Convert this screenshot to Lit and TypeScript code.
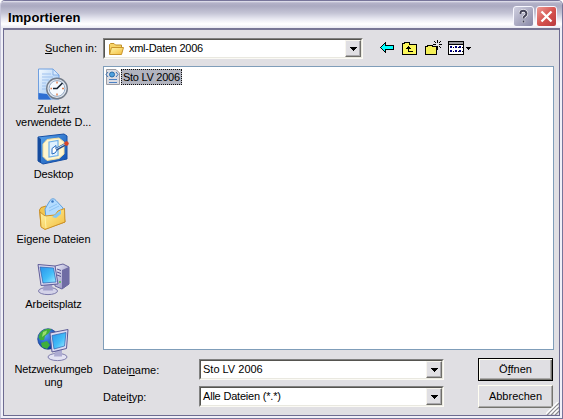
import { LitElement, html, css, svg } from "lit";
import { customElement, property } from "lit/decorators.js";

const defs = svg`<defs>
  <linearGradient id="paper" x1="0" y1="0" x2="1" y2="1"><stop offset="0" stop-color="#f4faff"/><stop offset="1" stop-color="#8fbdf2"/></linearGradient>
  <linearGradient id="blue" x1="0" y1="0" x2="1" y2="1"><stop offset="0" stop-color="#5aa6ee"/><stop offset="1" stop-color="#0f4fb0"/></linearGradient>
  <linearGradient id="gold" x1="0" y1="0" x2="1" y2="1"><stop offset="0" stop-color="#fff6a8"/><stop offset="1" stop-color="#f3bc3c"/></linearGradient>
  <linearGradient id="screen" x1="0" y1="0" x2="1" y2="1"><stop offset="0" stop-color="#2a93ea"/><stop offset="0.55" stop-color="#42bdf8"/><stop offset="1" stop-color="#a5ecff"/></linearGradient>
  <linearGradient id="metal" x1="0" y1="0" x2="1" y2="1"><stop offset="0" stop-color="#eeeefb"/><stop offset="1" stop-color="#8583b5"/></linearGradient>
  <radialGradient id="globe" cx="0.35" cy="0.3" r="0.75"><stop offset="0" stop-color="#55a8fa"/><stop offset="1" stop-color="#082f96"/></radialGradient>
</defs>`;

const places: Record<string, unknown> = {
  recent: svg`
    <path d="M1.500 1H16L22 7V31H1.500Z" fill="url(#paper)" stroke="#6f9fe0"/>
    <path d="M16 1V7H22Z" fill="#d5e7fc" stroke="#6f9fe0" stroke-width=".7"/>
    <path d="M5 6h9M5 9h11M5 12h7M5 15h4M5 18h4M5 21h4" stroke="#9fc1ee"/>
    <path d="M1.500 25L10 26L14 31.500H1.500Z" fill="#2f6fd2"/>
    <circle cx="20" cy="20.500" r="10.300" fill="#dfe5ee" stroke="#737c8a" stroke-width="1.400"/>
    <circle cx="20" cy="20.500" r="7.900" fill="#f6faff" stroke="#98acc6"/>
    <path d="M13.500 20.500h1.500M25 20.500h2" stroke="#e08050" stroke-width="1.500"/>
    <path d="M20 13.500v2M20 25.500v2" stroke="#e08050" stroke-width="1.500"/>
    <path d="M25.500 15L20 20.500H16" fill="none" stroke="#1c2836" stroke-width="1.700"/>`,
  desktop: svg`
    <path d="M1 4L27 1L30 3V26L6 31L1 28Z" fill="url(#blue)" stroke="#1750a6"/>
    <path d="M1 4L4 6V30L1 28Z" fill="#164b9d"/>
    <path d="M10 6.500L22 5L27 9V21L22 25.500L10 27.500L6 23.500V11Z" fill="#fff6cf" stroke="#f0dc9c"/>
    <path d="M12 9L21 7.500V22.500L12 24Z" fill="#dff1ff" stroke="#6fb0ea" stroke-width="1.200"/>
    <path d="M15 21V15.500L19 12.500V15.500L22 14.500L18 20Z" fill="#fff" stroke="#276dc0"/>
    <path d="M19 16.500L28 11.500" stroke="#314f85" stroke-width="2.600"/><path d="M19 16L28 11" stroke="#a8d7ff"/>
    <circle cx="29.500" cy="10.500" r="2.200" fill="#d84525"/>`,
  files: svg`
    <path d="M2.500 12L4 9.500L9 8L11 10L26 11L28 24L8 31L4 28Z" fill="#f2c650" stroke="#c98e25"/>
    <path d="M8 11L13 2.500Q16 -1 19 2.500L26 10L24 22L9 20Z" fill="#b4dcff" stroke="#5f9fdc"/>
    <circle cx="15.500" cy="3.500" r="1.300" fill="#3b79c4"/>
    <path d="M12 10L20 6M12 13L22 8" stroke="#8cc4f4"/>
    <path d="M3 14L8 18L18 17L21 13L27.500 10.500L28 24L8 31.500L4 29Z" fill="url(#gold)" stroke="#cc922a"/>
    <path d="M8 18L9 30" stroke="#fff2a8"/>
    <path d="M15 19L24 12L24 16L19 20Z" fill="#83c9f8"/>`,
  computer: svg`
    <path d="M18 3L26 1L32 4V21L25 26L18 23Z" fill="url(#metal)" stroke="#67649c"/>
    <path d="M25 7L32 4V21L25 26Z" fill="#6f6ca4"/><path d="M20 6l4 1.500M20 9l4 1.500M20 12l4 1.500" stroke="#555290"/>
    <circle cx="23" cy="19" r="1" fill="#51c04a"/>
    <ellipse cx="11" cy="28" rx="9.500" ry="3.600" fill="#d4d3e9" stroke="#7b79aa"/>
    <path d="M7 21H15L16 27.500H6Z" fill="#a19fca"/>
    <path d="M1 1.500L18 3L21 21L4 22.500Z" fill="#d6d5ee" stroke="#605e9b"/>
    <path d="M3 4L16.500 5L19 19L6 20Z" fill="url(#screen)" stroke="#2a62b0" stroke-width=".7"/>`,
  network: svg`
    <circle cx="11" cy="11" r="10.300" fill="url(#globe)" stroke="#143c94" stroke-width=".7"/>
    <path d="M3 5Q8 0 14 1L12 5L8 8L7 12L3 12L1.500 9ZM4 15L10 13L13 17L10 21L5 19Z" fill="#3fae3c"/>
    <path d="M6 4L10 2.500L9 6L5 9Z" fill="#9ade6c"/>
    <ellipse cx="20.500" cy="29" rx="9.500" ry="3.600" fill="#e4e3f3" stroke="#7f7dad"/>
    <path d="M18 22L25 21L25 28.500H17Z" fill="#adabd2"/>
    <path d="M13 5L31 1.500L29.500 20.500L15 24Z" fill="#dcdbf2" stroke="#5b5996"/>
    <path d="M15 7.500L29 4.500L27.500 18L17 21Z" fill="url(#screen)" stroke="#2a62b0" stroke-width=".7"/>`,
};

const folder = html`<svg width="16" height="16" viewBox="0 0 16 16">${defs}
  <path d="M1.500 13V3.500L2.500 2.500H6L7.500 4H13.500V7" fill="#f7d468" stroke="#c2922b"/>
  <path d="M1.500 13.500L3.500 6.500H15.500L13.500 13.500Z" fill="url(#gold)" stroke="#c9952c"/></svg>`;

@customElement("drop-box")
class DropBox extends LitElement {
  static styles = css`
    :host { display: flex; box-sizing: border-box; height: 21px; background: #fff; border: 1px solid; border-color: #808080 #fbfaf4 #fbfaf4 #808080; }
    .in { display: flex; flex: 1; align-items: center; border: 1px solid; border-color: #55544f #e9e8e0 #e9e8e0 #55544f; }
    .val { flex: 1; display: flex; align-items: center; }
    .btn { width: 16px; align-self: stretch; box-sizing: border-box; background: #e0dfe3; display: flex; align-items: center; justify-content: center; border: 1px solid; border-color: #f7f5ee #6f6e69 #6f6e69 #f7f5ee; box-shadow: inset -1px -1px #a9a8ac; }
  `;
  render() {
    return html`<div class="in"><div class="val"><slot></slot></div>
      <div class="btn"><svg width="7" height="4" shape-rendering="crispEdges"><path d="M0 0H7V1H6V2H5V3H4V4H3V3H2V2H1V1H0Z"/></svg></div></div>`;
  }
}

@customElement("place-item")
class PlaceItem extends LitElement {
  @property() icon = "";
  static styles = css`
    :host { display: flex; flex-direction: column; align-items: center; height: 65px; }
    svg { flex: none; overflow: visible; margin-bottom: 2px; }
    .txt { line-height: 13px; text-align: center; white-space: nowrap; letter-spacing: -.1px; }
  `;
  render() {
    return html`<svg width="33" height="33" viewBox="0 0 33 33">${defs}${places[this.icon]}</svg><div class="txt"><slot></slot></div>`;
  }
}

@customElement("app-root")
class AppRoot extends LitElement {
  static styles = css`
    :host { display: block; width: 563px; height: 419px; overflow: hidden; font: 11px/13px "Liberation Sans", Arial, sans-serif; color: #000; }
    * { box-sizing: border-box; }
    .win { height: 419px; display: flex; flex-direction: column; background: #f0f0f8; border: 1px solid #77759a; border-left-color: #c6c5da; border-radius: 5px 5px 0 0; padding: 0 2px 2px; }
    .bar { height: 27px; flex: none; margin: 0 -2px; padding: 3px 5px 0 7px; display: flex; align-items: center; gap: 2px; border-radius: 4px 4px 0 0; background: linear-gradient(#e8e8f2 0, #b3b2c8 2px, #abaac1 5px, #c4c4d5 12px, #e8e8f1 18px, #fff 23px, #e9e9f1 27px); }
    .title { flex: 1; font-size: 13px; line-height: 15px; font-weight: bold; letter-spacing: .1px; padding-top: 2px; }
    .cap { width: 21px; height: 21px; border: 1px solid #f7f7ff; border-radius: 3px; display: block; }
    .help { background: linear-gradient(135deg, #d0d0e0, #8887a6); }
    .close { background: linear-gradient(135deg, #ee9b94, #d44f4c 55%, #b93b40); }
    .body { flex: 1; background: #e0dfe3; border: 1px solid #6d6b91; border-top: 2px solid #777594; display: flex; padding: 8px 5px 0 0; position: relative; }
    .side { width: 99px; padding-top: 30px; flex: none; }
    .main { flex: 1; display: flex; flex-direction: column; }
    .look { height: 28px; display: flex; margin-left: -58px; }
    .lab { width: 58px; padding-top: 4px; }
    .look drop-box { width: 260px; }
    .tools { margin-left: 13px; }
    .list { height: 284px; background: #fff; border: 1px solid #7f9db9; padding: 2px 1px; display: flex; align-items: flex-start; }
    .sel { height: 16px; width: 61px; padding: 2px 0 0 2px; background: #b2b4bf; outline: 1px dotted #111; outline-offset: -1px; white-space: nowrap; }
    .form { display: grid; grid-template-columns: 96px 245px 34px 75px; padding-top: 8px; row-gap: 4px; }
    .form > * { align-self: center; }
    .form > .t { padding-top: 1px; }
    .push { grid-column: 4; height: 23px; display: flex; align-items: center; justify-content: center; background: #e0dfe3; border: 1px solid; border-color: #fffef2 #74736e #74736e #fffef2; box-shadow: inset -1px -1px #aaa9a9; }
    .dflt { border-color: #000; box-shadow: inset 1px 1px #fffef2, inset -1px -1px #74736e, inset -2px -2px #aaa9a9; }
    .t { white-space: nowrap; }
    .n1 { letter-spacing: -.27px; }
    .n2 { letter-spacing: -.2px; }
    .current { display: flex; align-items: center; gap: 5px; padding-left: 3px; }
    .val { padding-left: 2px; }
    .grip { position: absolute; right: 0; bottom: 0; }
  `;
  render() {
    return html`<div class="win">
      <div class="bar"><span class="title">Importieren</span>
        <svg class="cap help" viewBox="0 0 19 19"><path d="M6.500 7V5.500Q7 3.800 9.500 3.800T12.500 6.500Q12.500 8 10.500 9.300Q9.500 10 9.500 11.500M9.500 13.500V15.500" fill="none" stroke="#fff" stroke-width="3.200"/><path d="M6.500 7V5.500Q7 3.800 9.500 3.800T12.500 6.500Q12.500 8 10.500 9.300Q9.500 10 9.500 11.500M9.500 13.500V15.500" fill="none" stroke="#414057" stroke-width="2"/></svg>
        <svg class="cap close" viewBox="0 0 19 19"><path d="M4.500 4.500L14.500 14.500M14.500 4.500L4.500 14.500" stroke="#fff" stroke-width="2.300"/></svg>
      </div>
      <div class="body">
        <div class="side">
          <place-item icon="recent">Zuletzt<br>verwendete D...</place-item>
          <place-item icon="desktop">Desktop</place-item>
          <place-item icon="files">Eigene Dateien</place-item>
          <place-item icon="computer">Arbeitsplatz</place-item>
          <place-item icon="network">Netzwerkumgeb<br>ung</place-item>
        </div>
        <div class="main">
          <div class="look"><span class="lab t"><u>S</u>uchen in:</span>
            <drop-box><div class="current">${folder}<span class="t n1">xml-Daten 2006</span></div></drop-box>
            <svg class="tools" width="98" height="20" shape-rendering="crispEdges">
              <path d="M4.500 9.500L9.500 4.500V7.500H17.500V11.500H9.500V14.500Z" fill="#0ff" stroke="#000"/>
              <path d="M26.500 16.500V5.500H28.500V4.500H33.500V6.500H40.500V16.500Z" fill="#fbf65a" stroke="#000"/>
              <path d="M32 8h1v1h1v1h1v1h-2v2h4v1h-5v-3h-2v-1h1v-1h1z"/>
              <path d="M49.500 16.500V8.500H51.500V7.500H56.500V8.500H60.500V16.500Z" fill="#f4ef58" stroke="#000"/>
              <path d="M61 2h1v3h-1zM61 8h1v4h-1zM57 6h3v1h-3zM63 6h3v1h-3zM58 3h1v1h-1zM59 4h1v1h-1zM63 4h1v1h-1zM64 3h1v1h-1zM63 8h1v1h-1zM64 9h1v1h-1z"/>
              <path d="M72.500 3.500H87.500V16.500H72.500Z" fill="#fff" stroke="#000"/>
              <path d="M73 4h14v2H73z" fill="#98989c"/><path d="M72 6h16v1H72z"/>
              <path d="M74 8h2v2h-2zM79 8h2v2h-2zM83 8h2v2h-2zM74 12h2v2h-2zM79 12h2v2h-2zM83 12h2v2h-2z" fill="#00007b"/>
              <path d="M77 9h1v1h-1zM82 9h1v1h-1zM86 9h1v1h-1zM77 13h1v1h-1zM82 13h1v1h-1zM86 13h1v1h-1z"/>
              <path d="M90 9h5v1h-1v1h-1v1h-1v-1h-1v-1h-1z"/>
            </svg>
          </div>
          <div class="list">
            <svg width="16" height="16" viewBox="0 0 16 16"><path d="M1.500 .5H11L14.500 4V15.500H1.500Z" fill="#dcdde3" stroke="#9c9ca3"/><path d="M4 10.500h8M4 13.500h8" stroke="#4d82c4"/><path d="M3 3L1 5.500L3 8M11 3L13 5.500L11 8" fill="none" stroke="#3c72b4"/><circle cx="7" cy="5.500" r="2.500" fill="#4fa1dd" stroke="#286ca8"/></svg>
            <span class="sel n1">Sto LV 2006</span>
          </div>
          <div class="form">
            <span class="t">Datei<u>n</u>ame:</span><drop-box><span class="t val">Sto LV 2006</span></drop-box><div class="push dflt"><span>Ö<u>f</u>fnen</span></div>
            <span class="t">Datei<u>t</u>yp:</span><drop-box><span class="t n2 val">Alle Dateien (*.*)</span></drop-box><div class="push">Abbrechen</div>
          </div>
        </div>
        <svg class="grip" width="13" height="13" stroke-width="1.500"><path d="M1 13L13 1M5 13L13 5M9 13L13 9" stroke="#8f8e92"/><path d="M0 12L12 0M4 12L12 4M8 12L12 8" stroke="#fff"/></svg>
      </div>
    </div>`;
  }
}
